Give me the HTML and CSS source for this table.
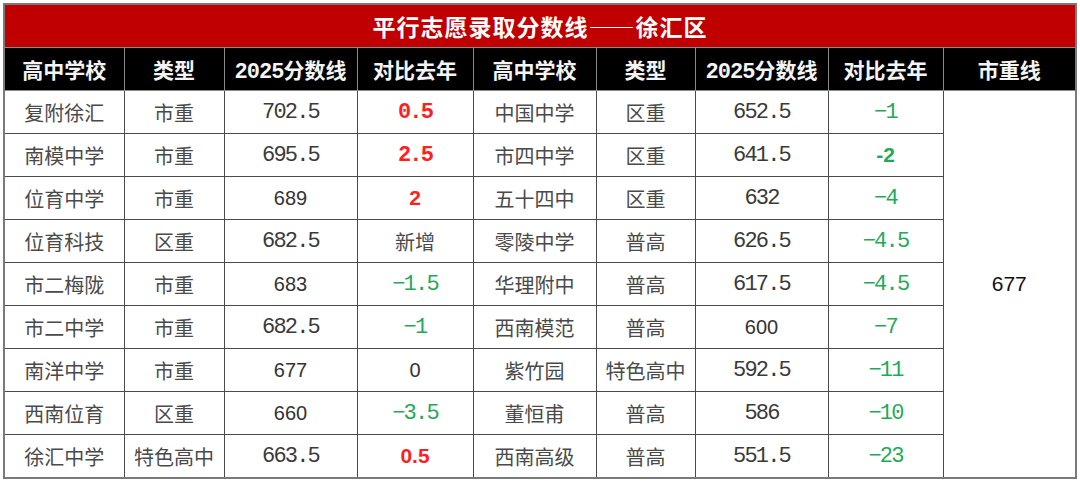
FILE: index.html
```html
<!DOCTYPE html>
<html lang="zh-CN">
<head>
<meta charset="utf-8">
<title>平行志愿录取分数线——徐汇区</title>
<link rel="stylesheet" href="styles.css">
</head>
<body>
<table class="score">
  <colgroup>
    <col class="c1"><col class="c2"><col class="c3"><col class="c4">
    <col class="c5"><col class="c6"><col class="c7"><col class="c8"><col class="c9">
  </colgroup>
  <thead>
    <tr class="title-row"><th colspan="9">平行志愿录取分数线——徐汇区</th></tr>
    <tr class="head-row">
      <th>高中学校</th><th>类型</th><th><span class="hd">2025</span>分数线</th><th>对比去年</th>
      <th>高中学校</th><th>类型</th><th><span class="hd">2025</span>分数线</th><th>对比去年</th>
      <th>市重线</th>
    </tr>
  </thead>
  <tbody>
    <tr>
      <td>复附徐汇</td><td>市重</td><td class="m">702.5</td><td class="m red b">0.5</td>
      <td>中国中学</td><td>区重</td><td class="m">652.5</td><td class="m green">−1</td>
      <td class="line" rowspan="9">677</td>
    </tr>
    <tr>
      <td>南模中学</td><td>市重</td><td class="m">695.5</td><td class="m red b">2.5</td>
      <td>市四中学</td><td>区重</td><td class="m">641.5</td><td class="s green b">-2</td>
    </tr>
    <tr>
      <td>位育中学</td><td>市重</td><td class="s">689</td><td class="s red b">2</td>
      <td>五十四中</td><td>区重</td><td class="m">632</td><td class="m green">−4</td>
    </tr>
    <tr>
      <td>位育科技</td><td>区重</td><td class="m">682.5</td><td>新增</td>
      <td>零陵中学</td><td>普高</td><td class="m">626.5</td><td class="m green">−4.5</td>
    </tr>
    <tr>
      <td>市二梅陇</td><td>市重</td><td class="s">683</td><td class="m green">−1.5</td>
      <td>华理附中</td><td>普高</td><td class="m">617.5</td><td class="m green">−4.5</td>
    </tr>
    <tr>
      <td>市二中学</td><td>市重</td><td class="m">682.5</td><td class="m green">−1</td>
      <td>西南模范</td><td>普高</td><td class="s">600</td><td class="m green">−7</td>
    </tr>
    <tr>
      <td>南洋中学</td><td>市重</td><td class="s">677</td><td class="s">0</td>
      <td>紫竹园</td><td>特色高中</td><td class="m">592.5</td><td class="m green">−11</td>
    </tr>
    <tr>
      <td>西南位育</td><td>区重</td><td class="s">660</td><td class="m green">−3.5</td>
      <td>董恒甫</td><td>普高</td><td class="m">586</td><td class="m green">−10</td>
    </tr>
    <tr>
      <td>徐汇中学</td><td>特色高中</td><td class="m">663.5</td><td class="s red b">0.5</td>
      <td>西南高级</td><td>普高</td><td class="m">551.5</td><td class="m green">−23</td>
    </tr>
  </tbody>
</table>
</body>
</html>
```

FILE: styles.css
```css
html, body {
  margin: 0;
  padding: 0;
  background: #ffffff;
}

body {
  padding: 3px 0 0 3px;
  font-family: "Noto Sans CJK SC", "Liberation Sans", sans-serif;
}

.score {
  border-collapse: collapse;
  table-layout: fixed;
  width: 1072px;
  border: 2px solid #7a7a7a;
}

.c1 { width: 120px; }
.c2 { width: 100px; }
.c3 { width: 133px; }
.c4 { width: 116px; }
.c5 { width: 123px; }
.c6 { width: 99px; }
.c7 { width: 133px; }
.c8 { width: 115px; }
.c9 { width: 133px; }

.title-row th {
  background: #c00000;
  color: #ffffff;
  font-size: 23px;
  font-weight: 700;
  height: 42px;
  padding: 0;
  letter-spacing: 1px;
  border: 1px solid #8a8a8a;
}

.head-row th {
  background: #000000;
  color: #f4f4f4;
  font-size: 21px;
  font-weight: 700;
  height: 42px;
  padding: 0;
  border: 1px solid #8a8a8a;
  white-space: nowrap;
}

.hd {
  font-family: "Liberation Mono", monospace;
  font-size: 22px;
  letter-spacing: -1px;
}

td {
  height: 42px;
  padding: 0;
  text-align: center;
  border: 1px solid #4a4a4a;
  color: #4a4a4a;
  font-size: 20px;
  white-space: nowrap;
}

td.m {
  font-family: "Liberation Mono", monospace;
  font-size: 22px;
  letter-spacing: -1.8px;
  color: #3a3a3a;
}

td.s {
  font-family: "Liberation Sans", Arial, sans-serif;
  font-size: 20px;
  color: #333333;
}

td.red { color: #ff1f1f; }
td.green { color: #1faa5a; }
td.b { font-weight: 700; }
td.s.b { font-size: 21px; }

td.line {
  font-family: "Liberation Sans", Arial, sans-serif;
  font-size: 21px;
  color: #111111;
  border-right: 2px solid #7a7a7a;
}
```
